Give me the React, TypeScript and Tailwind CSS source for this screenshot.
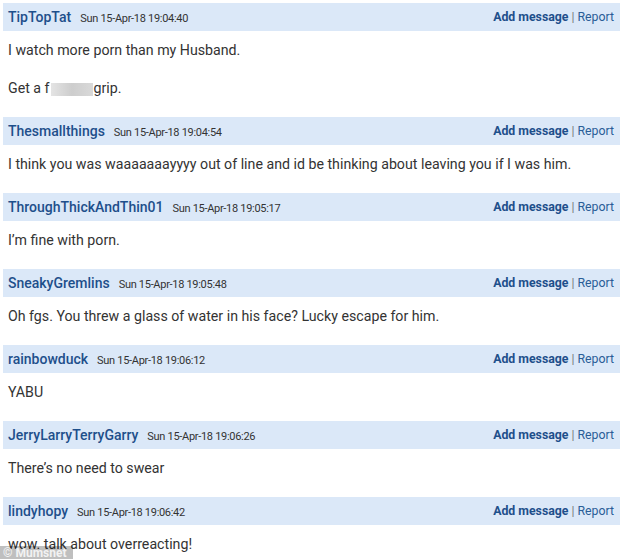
import React from 'react';

interface Post {
  user: string;
  date: string;
  body: React.ReactNode[];
}

const Censored = () => (
  <span className="inline-block align-middle w-[42px] h-[13px] mx-[1px] bg-gradient-to-r from-[#e4e4e4] via-[#cdcdcd] to-[#d9d9d9] blur-[0.6px]" />
);

const posts: Post[] = [
  {
    user: 'TipTopTat',
    date: 'Sun 15-Apr-18 19:04:40',
    body: [
      'I watch more porn than my Husband.',
      <>Get a f<Censored />grip.</>,
    ],
  },
  {
    user: 'Thesmallthings',
    date: 'Sun 15-Apr-18 19:04:54',
    body: ['I think you was waaaaaaayyyy out of line and id be thinking about leaving you if I was him.'],
  },
  {
    user: 'ThroughThickAndThin01',
    date: 'Sun 15-Apr-18 19:05:17',
    body: ['I\u2019m fine with porn.'],
  },
  {
    user: 'SneakyGremlins',
    date: 'Sun 15-Apr-18 19:05:48',
    body: ['Oh fgs. You threw a glass of water in his face? Lucky escape for him.'],
  },
  {
    user: 'rainbowduck',
    date: 'Sun 15-Apr-18 19:06:12',
    body: ['YABU'],
  },
  {
    user: 'JerryLarryTerryGarry',
    date: 'Sun 15-Apr-18 19:06:26',
    body: ['There\u2019s no need to swear'],
  },
  {
    user: 'lindyhopy',
    date: 'Sun 15-Apr-18 19:06:42',
    body: ['wow. talk about overreacting!'],
  },
];

const PostItem: React.FC<{ post: Post }> = ({ post }) => (
  <div>
    <div className="h-[28px] bg-[#dbe8f8] flex items-center justify-between pl-[5px] pr-[6px]">
      <div className="flex items-baseline gap-[9px]">
        <span className="text-[14px] font-medium text-[#1e4f8b]">{post.user}</span>
        <span className="text-[11px] text-[#333] tracking-[-0.3px]">{post.date}</span>
      </div>
      <div className="text-[12.3px] flex items-baseline gap-[3px]">
        <span className="font-bold text-[#1e4f8b]">Add message</span>
        <span className="text-[#777]">|</span>
        <span className="text-[#2a5d97]">Report</span>
      </div>
    </div>
    <div className="pt-[9px] pb-[19px] pl-[5px] flex flex-col gap-[18px]">
      {post.body.map((p, i) => (
        <p key={i} className="text-[14.2px] leading-[20px] text-[#333]">
          {p}
        </p>
      ))}
    </div>
  </div>
);

export default function App() {
  return (
    <div className="relative w-[634px] h-[559px] overflow-hidden bg-white font-['Roboto',sans-serif]">
      <div className="pt-[3px] pl-[3px] w-[620px]">
        {posts.map((p) => (
          <PostItem key={p.user} post={p} />
        ))}
      </div>
      <div className="absolute left-0 bottom-0 w-[73px] h-[13px] bg-black/25 flex items-center pl-[3px]">
        <span className="text-[12px] leading-none font-bold text-white/80">© Mumsnet</span>
      </div>
    </div>
  );
}
